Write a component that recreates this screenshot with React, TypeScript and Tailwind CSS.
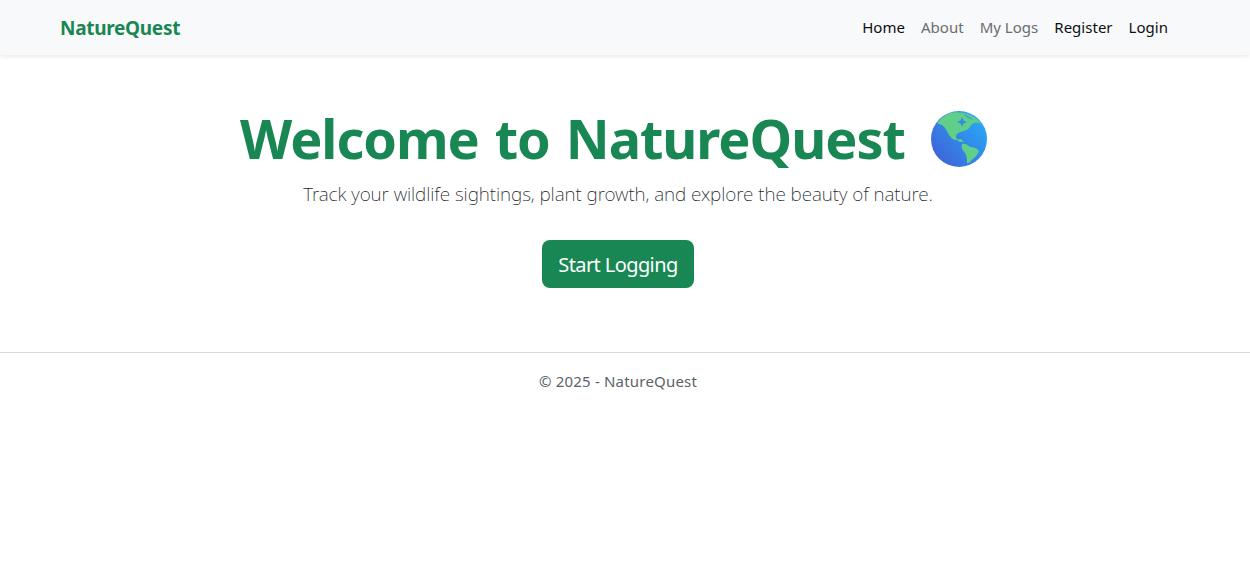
const Globe = () => (
  <svg viewBox="0 0 56 56" className="mt-[4px] h-[56px] w-[56px] shrink-0">
    <defs>
      <linearGradient id="sea" x1="0.1" y1="0.9" x2="0.9" y2="0.2">
        <stop offset="0" stopColor="#3f63d8" />
        <stop offset="1" stopColor="#29a5f5" />
      </linearGradient>
      <clipPath id="ball">
        <circle cx="28" cy="28" r="28" />
      </clipPath>
    </defs>
    <circle cx="28" cy="28" r="28" fill="url(#sea)" />
    <g clipPath="url(#ball)" fill="#5fcf8a">
      <path d="M6 12 C10 7 14 4 19 2 C22 1 28 1 33 2 C41 4 47 8 51 13 C47 12 44 11 41 13 C38 17 37 19 33 20 C29 21 26 22 25 25 C25 28 27 29 29 28 C31 28 31 30 33 31 C30 31 28 31 26 29 C22 29 20 27 18 24 C16 20 14 16 11 14 C9 13 7 13 6 12 Z" />
      <path d="M31 33 C34 32 37 34 39 36 C43 36 47 38 48 40 C46 45 43 47 41 49 C39 51 37 53 36 52 C36 48 36 45 34 42 C32 40 30 37 31 33 Z" />
    </g>
    <path d="M31 6 L32.5 9.5 L36 11 L32.5 12.5 L31 16 L29.5 12.5 L26 11 L29.5 9.5 Z" fill="#3a8ae0" />
    <path d="M32 3 C36 4 40 6 42 9 C38 8 35 6 32 3 Z" fill="#3f9fe8" />
  </svg>
);

const NavLink = ({ label, muted }: { label: string; muted?: boolean }) => (
  <a className={muted ? "px-2 py-2 text-[#6a6d70]" : "px-2 py-2 text-[#0e0f10]"} href="#">
    {label}
  </a>
);

const App = () => {
  return (
    <div className="min-h-[568px] bg-white font-['Noto_Sans','Open_Sans',sans-serif] text-[15px] text-[#212529]">
      <nav className="h-[55px] bg-[#f8f9fa] shadow-[0_2px_4px_rgba(0,0,0,0.075)]">
        <div className="mx-[48px] flex h-full w-[1140px] items-center justify-between px-3">
          <a className="pt-[1px] text-[19px] font-bold tracking-[-0.3px] text-[#198754]" href="#">
            NatureQuest
          </a>
          <div className="flex items-center tracking-[0.02px]">
            <NavLink label="Home" />
            <NavLink label="About" muted />
            <NavLink label="My Logs" muted />
            <NavLink label="Register" />
            <NavLink label="Login" />
          </div>
        </div>
      </nav>

      <main className="mr-[14px] flex flex-col items-center pt-[48px]">
        <h1 className="flex h-[67px] items-center gap-[26px] pr-[9px] text-[54px] font-bold tracking-[-1.05px] [word-spacing:3px] text-[#198754]">
          <span className="pt-[4px]">Welcome to NatureQuest</span>
          <Globe />
        </h1>
        <p className="mt-[9px] h-[30px] text-[19px] font-extralight leading-[30px] tracking-[-0.07px] text-[#212529]">
          Track your wildlife sightings, plant growth, and explore the beauty of nature.
        </p>
        <button className="mt-[31px] h-[48px] w-[152px] rounded-lg bg-[#198754] pt-[2px] text-[20px] tracking-[-0.6px] text-white" type="button">
          Start Logging
        </button>
      </main>

      <footer className="mt-[64px] border-t border-[#d8d8d8] pt-[17px]">
        <p className="mr-[14px] text-center tracking-[0.2px] text-[#5c6268]">© 2025 - NatureQuest</p>
      </footer>
    </div>
  );
};

export default App;
